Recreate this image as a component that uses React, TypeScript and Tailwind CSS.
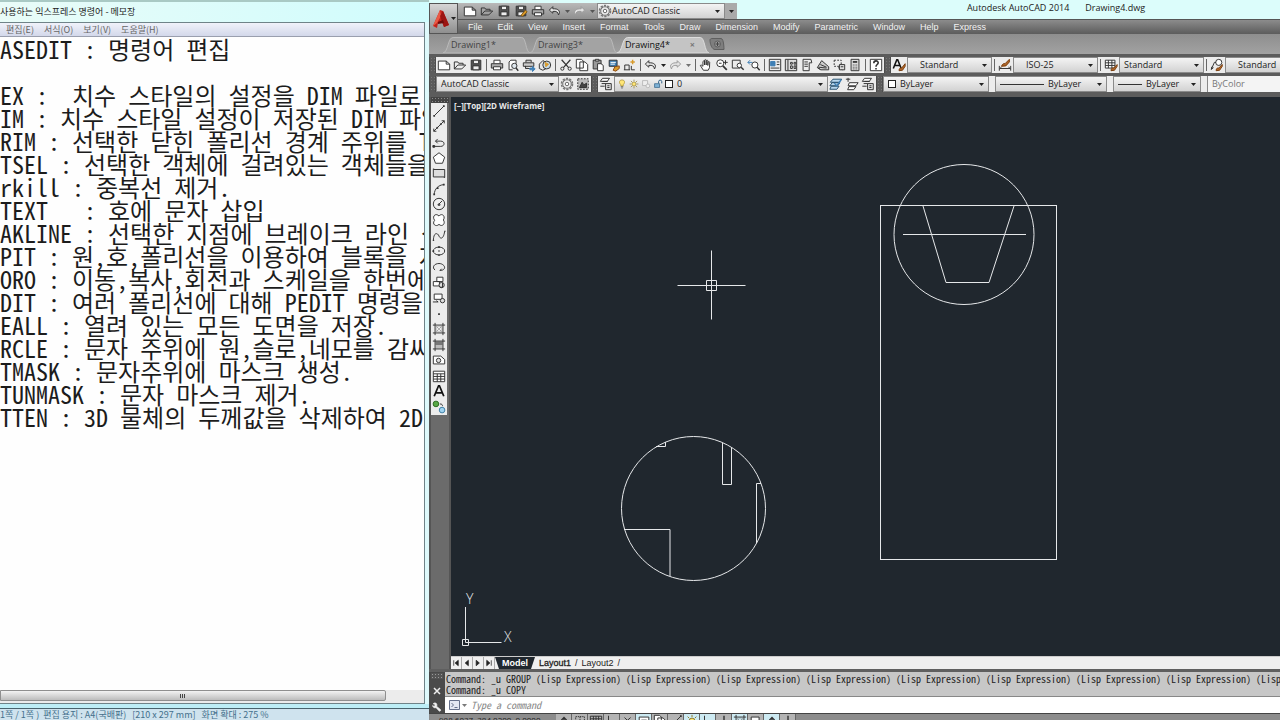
import React from 'react';
import clsx from 'clsx';

const NOTES = `ASEDIT : 명령어 편집

EX :  치수 스타일의 설정을 DIM 파일로 저장
IM : 치수 스타일 설정이 저장된 DIM 파일
RIM : 선택한 닫힌 폴리선 경계 주위를 TRIM
TSEL : 선택한 객체에 걸려있는 객체들을
rkill : 중복선 제거.
TEXT   : 호에 문자 삽입
AKLINE : 선택한 지점에 브레이크 라인 삽입
PIT : 원,호,폴리선을 이용하여 블록을 자름
ORO : 이동,복사,회전과 스케일을 한번에
DIT : 여러 폴리선에 대해 PEDIT 명령을
EALL : 열려 있는 모든 도면을 저장.
RCLE : 문자 주위에 원,슬로,네모를 감싸
TMASK : 문자주위에 마스크 생성.
TUNMASK : 문자 마스크 제거.
TTEN : 3D 물체의 두께값을 삭제하여 2D`;

const ink = '#333';
const amber = '#d89a2b';
const blue = '#3f7fb5';

/* Glyphs are drawn on a 16x16 grid */
const glyphs: Record<string, React.ReactNode> = {
  new: <path d="M1.5 3.5h9l4 3.500v6.500h-13zM10.5 3.5v3.500h4" fill="#fff" />,
  open: <path d="M1.5 12.5v-8h4l1 1.5h5v2M1.5 12.5l4-4.5h9l-4.5 4.5z" />,
  save: (
    <>
      <path d="M2.5 2.5h11v11h-11z" fill="#555" />
      <path d="M5 2.5h6v4H5zM4.5 9h7v4.5h-7z" fill="#eee" />
    </>
  ),
  saveAs: (
    <>
      <path d="M2.5 2.5h11v11h-11z" fill="#555" />
      <path d="M5 2.5h6v4H5zM4.5 9h7v4.5h-7z" fill="#eee" />
      <path d="m8 13 5-6 2 2-5 5z" fill={amber} stroke="#875b12" />
    </>
  ),
  print: (
    <>
      <path d="M4.5 6V2.5h7V6" fill="#fff" />
      <path d="M1.5 6.5h13v5h-13z" fill="#aaa" />
      <path d="M4 10h8v3.5H4z" fill="#fff" />
    </>
  ),
  preview: (
    <>
      <path d="M3.5 13.5v-9l2-2h6v4M3.5 13.5h4" fill="#fff" />
      <circle cx="9.5" cy="9" r="3" fill="#dfe7ee" />
      <path d="m11.5 11.5 2.5 3" strokeWidth="1.6" />
    </>
  ),
  publish: (
    <>
      <path d="M4.5 5V2.5h6V5M1.5 5.5h12v4h-12zM4 9v3h5" fill="#ccc" />
      <path d="M9 11.5h3v-2l3 3-3 3v-2H9z" fill={blue} stroke={blue} />
    </>
  ),
  globe: (
    <>
      <path d="m1.5 7 4-4 4 2v7l-4 2-4-2z" fill="#e7e7e7" />
      <circle cx="10" cy="8" r="4.5" fill="#c6d9e6" />
      <path d="m8 5 4 2-3 3z" fill={amber} stroke={amber} />
    </>
  ),
  cut: (
    <>
      <path d="m3 2 8 9M13 2l-8 9" strokeWidth="1.4" />
      <circle cx="3.8" cy="12.2" r="1.8" />
      <circle cx="12.2" cy="12.2" r="1.8" />
    </>
  ),
  copy: <path d="M1.5 1.5h6l2 2v8h-8zM5.5 4.5h6l3 3v7h-9z" fill="#fff" />,
  paste: (
    <>
      <path d="M2.5 2.5h9v10h-9z" fill="#999" />
      <path d="M5 1.5h4v2H5z" fill="#ddd" />
      <path d="M7.5 6.5h4l2.5 2v6H7.5z" fill="#fff" />
    </>
  ),
  match: (
    <>
      <path d="M2.5 2.5h9v7h-9z" fill={blue} />
      <path d="M4 7h5M4 5h6" stroke="#fff" />
      <path d="M7 14l2-4 5-1v3l-4 3z" fill={amber} stroke="#8b4a14" />
    </>
  ),
  blockEdit: (
    <>
      <path d="M2 13.5V8h5v5.5M9.500 9v4.500h4M1 13.500h7" />
      <path d="M11 2v5M8.500 4.500h5" stroke={amber} strokeWidth="1.6" />
    </>
  ),
  undo: <path d="m5.5 3-4 4 4 3.500V8.500c4-.5 6 .5 6.500 4 3-4.500-.5-7.500-6.500-7z" fill="#e3e3e3" />,
  redo: <path d="m10.500 3 4 4-4 3.500V8.500c-4-.5-6 .5-6.500 4-3-4.500.5-7.500 6.500-7z" fill="#e3e3e3" stroke="#999" />,
  pan: (
    <path
      d="M5 14 1.500 8.500c1-1 2 0 3 1V4c.8-1 1.800-.5 1.800.3V8 2.500c.8-1 1.900-.5 1.900.3V8 3c.8-.9 1.900-.4 1.900.4V8.500l.3-4c.8-.8 1.800-.3 1.800.6L12 11l-1.500 3z"
      fill="#fff"
    />
  ),
  zoomRt: (
    <>
      <circle cx="6" cy="6" r="4" fill="#fff" />
      <path d="m9 9 4.500 4.500" strokeWidth="2" />
      <path d="M12 2.500v5M9.500 5h5M4.500 6h3" />
    </>
  ),
  zoomWin: (
    <>
      <path d="M1.500 2.500h9v9h-9z" />
      <circle cx="9.500" cy="8.500" r="2.500" fill="#fff" />
      <path d="m11.500 10.500 3 3" strokeWidth="1.6" />
    </>
  ),
  zoomPrev: (
    <>
      <circle cx="9" cy="8" r="3.500" fill="#fff" />
      <path d="m11.500 10.500 3 3.500" strokeWidth="1.6" />
      <path d="M1 5h5M1 5l2.500-2.500M1 5l2.500 2.500" stroke={blue} />
    </>
  ),
  props: (
    <>
      <path d="M1.500 1.500h13v13h-13z" fill="#eee" />
      <path d="M3 4h5v5H3z" fill={blue} stroke={blue} />
      <path d="M10 4.500h3M10 7.500h3M3 11.500h10" />
    </>
  ),
  palette: (
    <>
      <path d="M1.500 1.500h13v13h-13z" fill="#ddd" />
      <path d="M4.500 2v12M7.500 5h2v2h-2zM11.500 5h2v2h-2zM7.500 9h2v3h-2zM11.500 9h2v3h-2z" />
    </>
  ),
  tools: (
    <>
      <path d="M3.500 1.500h9l1 4h-3v9h-7z" fill="#eee" />
      <path d="M5 4.500h4M5 7h4M5 9.500h4" />
    </>
  ),
  sheets: (
    <>
      <path d="m1.500 11 5-8 8 7v3.500h-9z" fill="#ccc" />
      <path d="m3 10.500 9 1M5 7.500l7 3M2 11l3 2" />
    </>
  ),
  markup: (
    <>
      <path d="M2.500 2.500h8v7h-8zM7 11l6 3" strokeDasharray="2 1.500" />
      <path d="M8.500 7.500h6v6h-6zM10 10h3" fill="#ddd" />
    </>
  ),
  calc: (
    <>
      <path d="M3.500 1.500h9v13h-9z" fill="#ddd" />
      <path d="M5.500 4.500h5" strokeWidth="2" />
      <path d="M5.500 8h5M5.500 10.500h5M5.500 12.500h5" strokeDasharray="1 1" />
    </>
  ),
  help: (
    <>
      <path d="M1.500 1.500h13v13h-13z" fill="#fff" />
      <path d="M5.500 6c0-3.500 5-3.500 5-.5C10.500 7.500 8 7.500 8 10M8 11.500v1.500" strokeWidth="1.800" />
    </>
  ),
  gear: (
    <>
      <circle cx="8" cy="8" r="6.300" strokeWidth="1.800" strokeDasharray="2.600 1.350" stroke="#777" />
      <circle cx="8" cy="8" r="4.900" fill="#eee" stroke="#666" />
      <circle cx="8" cy="8" r="2" fill="#fff" stroke="#666" />
    </>
  ),
  workspace: (
    <>
      <path d="M2 2h12v12H2z" fill="#bbb" strokeDasharray="2 1.500" />
      <path d="m4 12 3-6 2 3 3-2v5z" fill="#444" />
    </>
  ),
  layers: (
    <>
      <path d="M4 1.500h8L9.500 5h-8zM4 5h6M3 7.500h5M1.500 10.500h5" fill="#fff" />
      <path d="M7.500 7.500h6.500v7H7.500zM9.500 10h2.500M9.500 12h2.500" fill="#ddd" />
    </>
  ),
  bulb: (
    <>
      <path d="M8 1.500c5 0 5 5 2 7.500v2H6V9C3 6.500 3 1.500 8 1.500z" fill="#ffe677" stroke="#a58a2a" />
      <path d="M6 12.500h4M7 14.500h2" />
    </>
  ),
  sun: (
    <>
      <circle cx="8" cy="8" r="3.300" fill="#ffe677" stroke="#8d7a2c" />
      <path d="M8 1v2.500M8 12.500V15M1 8h2.500M12.500 8H15M3 3l1.800 1.800M11.200 11.200 13 13M13 3l-1.800 1.800M3 13l1.800-1.800" stroke="#8d7a2c" />
    </>
  ),
  freeze: (
    <>
      <path d="M2.500 2.500h8v8h-8z" fill="#eee" stroke="#aaa" />
      <circle cx="11" cy="11" r="3" fill="#eee" stroke="#aaa" />
    </>
  ),
  lock: (
    <>
      <path d="M2.500 7.500h8v6h-8z" fill="#7fb2d6" stroke="#2c5f86" />
      <path d="M9 7V4c0-3 5-3 5 0v3" stroke="#2c5f86" strokeWidth="1.600" />
    </>
  ),
  layerCur: (
    <>
      <path d="M4.500 2.500h10l-3 3.500h-10zM3.500 6.500h9l-2.500 3.500h-9zM2.500 10.500h9L9 14H1z" fill="#b8d7ee" stroke="#28506e" />
      <path d="m6 7 3 3 5-7" stroke={blue} strokeWidth="1.600" />
    </>
  ),
  layerPrev: (
    <>
      <path d="M5 6.500h10L12.500 10h-9zM4.500 11h8L10 14.500H3z" fill="#fff" />
      <path d="M1 2.500h5M3.500 1v4.500" />
    </>
  ),
  textStyle: (
    <>
      <path d="m1.500 12 4-10h1l4 10M3 8.500h6" stroke="#111" strokeWidth="1.800" />
      <path d="M8 14.500c0-3 2-3.500 3-3l4-5v3L12 14z" fill="#b0672a" stroke="#7a3d0c" />
    </>
  ),
  dimStyle: (
    <>
      <path d="M1.500 9v5.500M14.500 9v5.500M2 12h12M2 12l2-1.500M14 12l-2-1.500" />
      <path d="M4 9.500c1-3 3-3.500 4-3l5-5v3L9 9z" fill="#b0672a" stroke="#7a3d0c" />
    </>
  ),
  tableStyle: (
    <>
      <path d="M1.500 2.500h11v9h-11zM1.500 5.500h11M1.500 8.500h11M5 2.500v9M9 2.500v9" fill="#fff" />
      <path d="M8 14.500c0-3 2-3.500 3-3l4-4v2L12 14z" fill="#b0672a" stroke="#7a3d0c" />
    </>
  ),
  leaderStyle: (
    <>
      <circle cx="10" cy="5" r="3.500" fill="#fff" />
      <path d="M1.500 13 5 5h2M1.500 13l.5-3M1.500 13 4 11" />
      <path d="M7 14.500c0-3 2-3.500 3-3l4-4v2L11 14z" fill="#b0672a" stroke="#7a3d0c" />
    </>
  ),
  line: (
    <>
      <path d="M3 13 13 3" />
      <path d="M1.500 12.500h2v2h-2zM12.500 1.500h2v2h-2z" fill={ink} stroke="none" />
    </>
  ),
  xline: (
    <>
      <path d="M2 14 14 2M2 14v-3M2 14h3M14 2v3M14 2h-3" />
      <path d="M5.500 9.500h1v1h-1zM9.500 5.500h1v1h-1z" fill={ink} />
    </>
  ),
  pline: (
    <>
      <path d="M2 13h8c5 0 5-6 0-6H4M4 7l2.500-2.500M4 7l2.500 2.500" />
      <path d="M1 12h2v2H1z" fill={ink} />
    </>
  ),
  polygon: <path d="m8 2 6.500 5-2.500 7H4L1.500 7z" fill="#fff" />,
  rect: <path d="M1.500 4h13v8.500h-13zM1 3.500h1.500M13.500 13H15" fill="#ddd" />,
  arc: (
    <>
      <path d="M2.500 14C3 8 7 3.500 13.500 3" />
      <path d="M1.500 13h2v2h-2zM5.500 6h2v2h-2zM12.500 2h2v2h-2z" fill={ink} stroke="none" />
    </>
  ),
  circle: (
    <>
      <circle cx="8" cy="8" r="6.500" fill="#eee" />
      <path d="m7.500 8.500 4-4M7 8h2v1.500H7z" />
    </>
  ),
  cloud: (
    <path d="M8 3.500c3-4 8 0 5 4.500 3 4-1.500 8.500-5 5-3.500 3.500-8.500-.5-5-4.500-3.500-5 1.500-9 5-5z" fill="#fff" />
  ),
  spline: <path d="M1.500 13.500C2 2 7 5 8 8s5 5 6.500-5.500M1 13h1.500M14 2.500h1.500" />,
  ellipse: (
    <>
      <ellipse cx="8" cy="8" rx="6.500" ry="4.500" fill="#eee" />
      <path d="M7 2.500h2v2H7zM7 7.500h2v1H7zM7 12h2v1.500H7zM.5 7h2v2h-2z" fill={ink} stroke="none" />
    </>
  ),
  ellArc: <path d="M3.500 11.500c-4-3-1-7.500 4.500-7.500s9 5.500 4 7.500l-3 .5M9 12l2-2" />,
  insert: (
    <>
      <path d="M5.500 2.500h7v5h-7zM1.500 7.500h7v5h-7z" fill="#fff" />
      <circle cx="11" cy="11.500" r="3" fill="#ddd" />
      <path d="M12 9v5h-3" />
    </>
  ),
  block: (
    <>
      <path d="M2.500 3.500h9v6h-9z" fill="#fff" />
      <circle cx="12" cy="11" r="2.500" fill="#ddd" />
      <path d="M1 12.500h6M7 12.500 5 11" />
    </>
  ),
  point: <path d="M7 7h2v2H7z" fill={ink} stroke="none" />,
  hatch: (
    <>
      <path d="M3.500 1v14M12.500 1v14M1 3.500h14M1 12.500h14" />
      <path d="M4 8l4-4M4 12l8-8M8 12l4-4M4 8l4 4M4 4l8 8M8 4l4 4" strokeWidth="0.6" stroke="#777" />
    </>
  ),
  gradient: (
    <>
      <path d="M4 4h8v4H4z" fill="#777" stroke="none" />
      <path d="M4 8h8v4H4z" fill="#bbb" stroke="none" />
      <path d="M3.500 1v14M12.500 1v14M1 3.500h14M1 12.500h14" />
    </>
  ),
  region: (
    <>
      <path d="M1.500 12.500v-9H10l4.500 4v5z" fill="#fff" />
      <circle cx="7.500" cy="8.500" r="2.500" fill="#ddd" />
    </>
  ),
  table: <path d="M1.500 2.500h13v12h-13zM1.500 5.500h13M1.500 8.500h13M1.500 11.500h13M6 5.500v9M10 5.500v9" fill="#fff" />,
  mtext: <path d="m2.500 14 5-12h1l5 12M4.500 10h7" stroke="#111" strokeWidth="2" />,
  addSel: (
    <>
      <circle cx="4.500" cy="4.500" r="3.200" fill="#58a846" stroke="#2c6a20" />
      <circle cx="11.500" cy="11.500" r="3.200" fill="#9fd3f0" stroke="#3a7da4" />
      <path d="M9 4.500c2.500 0 3 1 3 2.500" />
    </>
  ),
  wrench: (
    <path
      d="M6.500 2c-2-1-4-.5-4.500 1l2.500.5.5 2-2 1.500-2-1.500c0 3 3 4.500 5.500 3.500l5 5.500c1.500 1 3-1 2-2.500l-6-5C8 5 8 3 6.500 2z"
      fill="#f2f2f2"
      stroke="#f2f2f2"
    />
  ),
  snap: <path d="M3 3h10v10H3zM8 3v10M3 8h10" strokeDasharray="1.500 1" />,
  infer: <path d="M4 12h8M8 4v8M5 7l3-3 3 3" strokeWidth="1.600" />,
  grid: <path d="M1.500 2.500h13v11h-13zM1.500 5.500h13M1.500 8.500h13M5 2.500v11M8 2.500v11M11 2.500v11" />,
  ortho: <path d="M4 2v11h9" />,
  polar: <path d="M2 12h12M2 12l9-8M4 4l8 8" />,
  osnap: <path d="M2.500 3.500h11v9h-11zM5 7h6" fill="#fff" />,
  plus: <path d="M8 2v12M2 8h12" strokeWidth="1.600" />,
};

function Icon({ name, size = 'md' }: { name: string; size?: 'sm' | 'md' }) {
  return (
    <svg
      viewBox="0 0 16 16"
      aria-hidden="true"
      className={clsx('shrink-0', size === 'md' ? 'size-3.5' : 'size-2.5')}
      fill="none"
      stroke={ink}
      strokeWidth="1.1"
    >
      {glyphs[name]}
    </svg>
  );
}

function IconButton({ name, label }: { name: string; label: string }) {
  return (
    <button type="button" aria-label={label} className="flex h-4 w-4 shrink-0 items-center justify-center">
      <Icon name={name} />
    </button>
  );
}

const Triangle = () => (
  <svg viewBox="0 0 5 3" aria-hidden="true" className="h-[3px] w-[5px] shrink-0">
    <path d="M0 0h5L2.500 3z" fill="#222" />
  </svg>
);

const Separator = () => <span className="mx-0.5 h-3 w-px shrink-0 bg-[#666]" />;

const Grip = () => (
  <span className="w-[7px] shrink-0 self-stretch border-x border-[#4c4c4c] bg-[radial-gradient(#777_30%,#5c5c5c_35%)] bg-size-[3px_3px]" />
);

interface ComboProps {
  label: string;
  value: string;
  className?: string;
  textClass?: string;
  children?: React.ReactNode;
}

/* Drop-down with an optional swatch or line sample before its text */
function Combo({ label, value, className, textClass = 'pl-1', children }: ComboProps) {
  return (
    <div
      className={clsx(
        'relative flex h-4 shrink-0 items-center border border-[#8a8a8a] bg-linear-to-b from-[#f4f4f4] to-[#d2d2d2]',
        className
      )}
    >
      {children}
      <select
        aria-label={label}
        className={clsx('h-full min-w-0 flex-1 appearance-none bg-transparent text-[9px] leading-3 text-[#222] outline-none', textClass)}
      >
        <option>{value}</option>
      </select>
      <span className="pointer-events-none absolute inset-y-0 right-1 flex items-center">
        <Triangle />
      </span>
    </div>
  );
}

function Notepad() {
  return (
    <section className="flex w-[429px] shrink-0 flex-col bg-[#def9fb]">
      <div className="flex min-h-0 flex-1 flex-col border-t-2 border-[#a9c9c4]">
        <h1 className="h-5 shrink-0 bg-linear-to-r from-[#e9fcf8] to-[#cffcfd] font-['Noto_Sans_CJK_KR',sans-serif] text-[9px] leading-5 text-[#222]">
          사용하는 익스프레스 명령어 - 메모장
        </h1>
        <div className="mr-1 flex min-h-0 flex-1 flex-col border-y border-r border-[#6f8388]">
          <nav className="flex h-3.5 shrink-0 gap-2.5 border-b border-[#9a9fae] bg-linear-to-b from-[#f0f2fa] to-[#d3d8ea] pl-1.5 font-['Noto_Sans_CJK_KR',sans-serif] text-[9px] leading-[13px] text-[#666]">
            {['편집(E)', '서식(O)', '보기(V)', '도움말(H)'].map((item) => (
              <button type="button" key={item}>
                {item}
              </button>
            ))}
          </nav>
          <textarea
            aria-label="메모"
            wrap="off"
            spellCheck={false}
            defaultValue={NOTES}
            className="min-h-0 w-full flex-1 resize-none overflow-hidden whitespace-pre bg-[#fefefe] font-['Noto_Sans_Mono_CJK_KR','Noto_Sans_CJK_KR',monospace] text-[24px] leading-[23px] font-light text-[#1c1c1c] outline-none"
          />
          <div className="flex h-[13px] shrink-0 bg-[#ececec] pr-[38px]">
            <div className="flex h-[11px] flex-1 items-center justify-center gap-px rounded-r-xs border border-[#8f8f8f] bg-linear-to-b from-[#f3f3f3] to-[#bdbdbd] pr-[22px]">
              <span className="h-1 w-px bg-[#444]" />
              <span className="h-1 w-px bg-[#444]" />
              <span className="h-1 w-px bg-[#444]" />
            </div>
          </div>
        </div>
        <div className="h-1 shrink-0 bg-[#bdeef6]" />
      </div>
      <footer className="h-[12px] shrink-0 overflow-hidden border-t border-[#49636e] bg-[#cfe3ee] font-['Noto_Sans_CJK_KR',sans-serif] text-[9px] leading-[11px] whitespace-pre text-[#44708c]">
        {'1쪽 / 1쪽 )  편집 용지 : A4(국배판)   [210 x 297 mm]   화면 확대 : 275 %'}
      </footer>
    </section>
  );
}

const menus = [
  'File', 'Edit', 'View', 'Insert', 'Format', 'Tools', 'Draw', 'Dimension',
  'Modify', 'Parametric', 'Window', 'Help', 'Express',
];

function TitleArea() {
  return (
    <header className="flex h-[34px] shrink-0 bg-[#dcfdfb]">
      <button
        type="button"
        aria-label="Application menu"
        className="mt-[3px] flex w-[29px] shrink-0 items-center justify-center gap-px border border-[#555] bg-linear-to-b from-[#d6d6d6] to-[#8f8f8f]"
      >
        <svg viewBox="0 0 18 20" aria-hidden="true" className="h-5 w-[18px]">
          <path d="M1 17 8 1l3 1 6 14-5 2-2-5-4 1-1 5z" fill="#c2241c" />
          <path d="M8 1 1 17l4-3 4-7z" fill="#ea5a45" />
          <path d="m11 2 6 14-5 2-4-11z" fill="#9c1512" />
          <path d="m6 13 5-2 1 3-6 1z" fill="#6d0b0b" />
        </svg>
        <Triangle />
      </button>
      <div className="flex min-w-0 flex-1 flex-col">
        <div className="flex h-[19px] shrink-0">
          <div className="mt-[3px] flex items-center rounded-tr-sm bg-linear-to-b from-[#b9b9b9] to-[#8f8f8f] pl-1">
            <div className="flex gap-px">
              <IconButton name="new" label="New" />
              <IconButton name="open" label="Open" />
              <IconButton name="save" label="Save" />
              <IconButton name="saveAs" label="Save as" />
              <IconButton name="print" label="Plot" />
              <IconButton name="undo" label="Undo" />
            </div>
            <span className="flex w-2 justify-center opacity-60"><Triangle /></span>
            <IconButton name="redo" label="Redo" />
            <span className="flex w-2.5 justify-center opacity-60"><Triangle /></span>
            <Combo label="Quick workspace" value="AutoCAD Classic" className="w-[128px]" textClass="pl-0">
              <Icon name="gear" />
            </Combo>
            <button type="button" aria-label="Customize" className="flex h-4 w-3 items-center justify-center bg-[#aaa]">
              <Triangle />
            </button>
          </div>
          <div className="flex flex-1 justify-center gap-4 pr-[17px] pl-28 text-[9px] leading-[15px] whitespace-nowrap text-[#222]">
            <span>Autodesk AutoCAD 2014</span>
            <span>Drawing4.dwg</span>
          </div>
        </div>
        <nav className="flex flex-1 items-center gap-[15px] border-t border-[#555] bg-linear-to-b from-[#8c8c8c] to-[#5c5c5c] pl-2.5 font-['Liberation_Sans',sans-serif] text-[9px] leading-[13px] text-[#f2f2f2]">
          {menus.map((item) => (
            <button type="button" key={item}>
              {item}
            </button>
          ))}
        </nav>
      </div>
    </header>
  );
}

function DrawingTab({ name, active }: { name: string; active?: boolean }) {
  return (
    <button
      type="button"
      className={clsx(
        'relative flex h-4 shrink-0 items-center justify-between pr-2.5 text-[9px]',
        active ? 'w-[92px] text-[#111]' : 'w-[87px] text-[#444]'
      )}
    >
      <svg viewBox="0 0 95 16" preserveAspectRatio="none" aria-hidden="true" className="absolute inset-0 size-full">
        <path
          d="M0 16C6 15 5 .5 11 .5h75c5 0 4 14.500 9 15.500z"
          fill={active ? '#c4c4c4' : '#a3a3a3'}
          stroke={active ? '#ddd' : '#bbb'}
        />
      </svg>
      <span className="relative pl-2">{name}</span>
      {active && <span className="relative pr-1 font-bold text-[#777]">×</span>}
    </button>
  );
}

const standardTools: string[][] = [
  ['new', 'open', 'save'],
  ['print', 'preview', 'publish', 'globe'],
  ['cut', 'copy', 'paste', 'match', 'blockEdit'],
];

function Toolbars() {
  return (
    <div className="flex shrink-0 flex-col gap-[3px] border-t-[3px] border-b-[5px] border-[#5c5c5c] bg-[#5c5c5c]">
      <div className="flex h-4 items-center">
        <Grip />
        <div className="flex h-full shrink-0 items-center bg-[#ececec]">
          {standardTools.map((group, i) => (
            <React.Fragment key={i}>
              {group.map((tool) => (
                <IconButton key={tool} name={tool} label={tool} />
              ))}
              <Separator />
            </React.Fragment>
          ))}
          <IconButton name="undo" label="Undo" />
          <span className="flex w-2 justify-center"><Triangle /></span>
          <IconButton name="redo" label="Redo" />
          <span className="flex w-2.5 justify-center opacity-60"><Triangle /></span>
          <Separator />
          {['pan', 'zoomRt', 'zoomWin', 'zoomPrev'].map((tool) => (
            <IconButton key={tool} name={tool} label={tool} />
          ))}
          <Separator />
          {['props', 'palette', 'tools', 'sheets', 'markup', 'calc'].map((tool) => (
            <IconButton key={tool} name={tool} label={tool} />
          ))}
          <Separator />
          <IconButton name="help" label="Help" />
        </div>
        <Grip />
        <div className="flex h-full min-w-0 flex-1 items-center bg-[#ececec]">
          <IconButton name="textStyle" label="Text style" />
          <Combo label="Text style" value="Standard" className="w-[85px]" textClass="pl-3" />
          <Separator />
          <IconButton name="dimStyle" label="Dimension style" />
          <Combo label="Dimension style" value="ISO-25" className="w-[85px]" textClass="pl-3" />
          <Separator />
          <IconButton name="tableStyle" label="Table style" />
          <Combo label="Table style" value="Standard" className="w-[85px]" textClass="pl-1" />
          <Separator />
          <IconButton name="leaderStyle" label="Multileader style" />
          <Combo label="Multileader style" value="Standard" className="w-[85px]" textClass="pl-3" />
        </div>
      </div>
      <div className="flex h-4 items-center">
        <Grip />
        <div className="flex h-full shrink-0 items-center bg-[#ececec]">
          <Combo label="Workspace" value="AutoCAD Classic" className="w-[123px]" textClass="pl-1" />
          <IconButton name="gear" label="Workspace settings" />
          <IconButton name="workspace" label="My workspace" />
        </div>
        <Grip />
        <div className="flex h-full shrink-0 items-center bg-[#ececec]">
          <IconButton name="layers" label="Layer properties" />
          <Combo label="Layer" value="0" className="w-[214px]" textClass="pl-1">
            <span className="flex gap-0.5 pl-0.5">
              <Icon name="bulb" size="sm" />
              <Icon name="sun" size="sm" />
              <Icon name="freeze" size="sm" />
              <Icon name="lock" size="sm" />
            </span>
            <span className="ml-0.5 size-2 border border-[#222] bg-white" />
          </Combo>
          <IconButton name="layerCur" label="Make current" />
          <IconButton name="layerPrev" label="Layer previous" />
          <IconButton name="layers" label="Layer states" />
        </div>
        <Grip />
        <div className="flex h-full min-w-0 flex-1 items-center gap-1.5 bg-[#ececec]">
          <Combo label="Color" value="ByLayer" className="w-[106px]" textClass="pl-1">
            <span className="ml-1 size-2 border border-[#222] bg-white" />
          </Combo>
          <Combo label="Linetype" value="ByLayer" className="w-[112px]" textClass="pl-1">
            <span className="ml-1 h-px w-11 bg-[#333]" />
          </Combo>
          <Combo label="Lineweight" value="ByLayer" className="w-[88px]" textClass="pl-1">
            <span className="ml-1 h-px w-6 bg-[#333]" />
          </Combo>
          <div className="flex h-full min-w-0 flex-1 border-l border-[#888] bg-[#f4f4f4]">
            <select disabled aria-label="Plot style" className="w-full appearance-none pl-1 text-[9px] text-[#777]">
              <option>ByColor</option>
            </select>
          </div>
        </div>
      </div>
    </div>
  );
}

const drawTools = [
  'line', 'xline', 'pline', 'polygon', 'rect', 'arc', 'circle', 'cloud', 'spline', 'ellipse',
  'ellArc', 'insert', 'block', 'point', 'hatch', 'gradient', 'region', 'table', 'mtext', 'addSel',
];

function Drawing() {
  return (
    <div className="relative min-h-0 flex-1 overflow-hidden bg-[#20272e]">
      <svg className="absolute inset-0 size-full" fill="none" stroke="#e6e8ea" aria-label="Model space">
        <rect x="429.5" y="108.5" width="176" height="354" />
        <circle cx="513" cy="137.5" r="70" />
        <path d="M472 109 495 185.500h43L563 109M452 137.500h123" />
        <circle cx="242.500" cy="411.500" r="72" />
        <path d="M205 349.500h9.500V345M271.500 346v41.500h9V351M310 386.500h-4.500V446M173 432.500h46V479" />
        <path d="M260.500 153.500v69M226.500 188.500h68M255.500 183.500h10v10h-10z" />
        <path d="M14.500 510v35.500h36M11.500 542.500h6v6h-6z" />
        <g fill="#e6e8ea" stroke="none" fontFamily="'Open Sans', sans-serif" fontSize="14" fontWeight="300">
          <text x="15" y="507">Y</text>
          <text x="53" y="545">X</text>
        </g>
      </svg>
      <p className="relative pt-[3px] pl-[3px] text-[8px] leading-3 font-bold text-[#e8e8e8]">[−][Top][2D Wireframe]</p>
    </div>
  );
}

function LayoutTabs() {
  return (
    <div className="flex h-[13px] shrink-0 border-t border-[#ccc] bg-[#efefef] font-['Liberation_Sans',sans-serif] text-[9px] leading-3 text-[#222]">
      {['M3 2v6M8 2 4.500 5 8 8z', 'M7 2 3.500 5 7 8z', 'M3.500 2 7 5 3.500 8z', 'M8 2v6M3 2l3.500 3L3 8z'].map((d, i) => (
        <button type="button" key={i} aria-label={`Scroll layouts ${i + 1}`} className="w-[11px] shrink-0 border-r border-[#aaa]">
          <svg viewBox="0 0 11 10" className="h-2.5 w-full" fill="#222" stroke="#222" strokeWidth="0.8">
            <path d={d} />
          </svg>
        </button>
      ))}
      <button type="button" className="bg-[#20272e] px-[7px] font-bold text-white [clip-path:polygon(0_0,100%_0,calc(100%-4px)_100%,4px_100%)]">
        Model
      </button>
      <button type="button" className="pl-1 [-webkit-text-stroke:0.3px_#222]">Layout1</button>
      <span className="px-1">/</span>
      <button type="button">Layout2</button>
      <span className="px-1">/</span>
    </div>
  );
}

function CommandLine() {
  return (
    <div className="flex h-[41px] shrink-0 bg-[#4a4a4a]">
      <div className="flex w-4 shrink-0 flex-col items-center justify-between py-px">
        <span className="h-1.5 w-3 bg-[radial-gradient(#999_30%,#555_35%)] bg-size-[3px_3px]" />
        <button type="button" aria-label="Close" className="flex">
          <svg viewBox="0 0 8 8" className="size-2" stroke="#eee" strokeWidth="1.5">
            <path d="m1 1 6 6M7 1 1 7" />
          </svg>
        </button>
        <button type="button" aria-label="Customize" className="flex">
          <Icon name="wrench" size="sm" />
        </button>
      </div>
      <div className="flex min-w-0 flex-1 flex-col font-['Noto_Sans_Mono_CJK_KR',monospace] text-[10px]">
        <div className="h-[25px] overflow-hidden border-b border-[#888] bg-[#c7c7c7] pt-px pl-px leading-[11px] whitespace-pre text-[#222]">
          {'Command: _u GROUP' + ' (Lisp Expression)'.repeat(9) + '\nCommand: _u COPY'}
        </div>
        <label className="flex flex-1 items-center gap-0.5 bg-white pl-1">
          <svg viewBox="0 0 11 10" aria-hidden="true" className="h-2.5 w-[11px] shrink-0" fill="#e4e8f2" stroke="#66708a">
            <path d="M.5.5h10v9H.5zM2.500 3l2 2-2 2M5.500 7.500h3" />
          </svg>
          <span className="opacity-60"><Triangle /></span>
          <input
            type="text"
            aria-label="Command"
            placeholder="Type a command"
            className="min-w-0 flex-1 pl-0.5 leading-[14px] italic outline-none placeholder:text-[#888]"
          />
        </label>
      </div>
    </div>
  );
}

const toggles = [
  { name: 'infer' },
  { name: 'snap' },
  { name: 'grid' },
  { name: 'ortho' },
  { name: 'polar' },
  { name: 'osnap', on: true },
  { name: 'copy' },
  { name: 'line' },
  { name: 'sun', on: true },
  { name: 'ortho', on: true },
  { name: 'plus' },
  { name: 'hatch', on: true },
  { name: 'block' },
  { name: 'infer', on: true },
  { name: 'plus' },
];

function StatusBar() {
  return (
    <footer className="flex h-[7px] shrink-0 overflow-hidden border-t border-[#444] bg-[#8c8c8c] text-[8px] leading-3 text-[#222]">
      <span className="w-[127px] shrink-0 pl-2.5 whitespace-nowrap">988.6037, 384.0200, 0.0000</span>
      {toggles.map((toggle, i) => (
        <button
          type="button"
          key={i}
          aria-label={`${toggle.name} mode`}
          className={clsx('flex h-4 w-4 shrink-0 justify-center border-r border-[#666]', toggle.on ? 'bg-[#cdeaf2]' : 'bg-[#b4b4b4]')}
        >
          <Icon name={toggle.name} />
        </button>
      ))}
    </footer>
  );
}

function AutoCad() {
  return (
    <main className="flex min-w-0 flex-1 flex-col overflow-hidden bg-[#676767]">
      <TitleArea />
      <div className="flex h-5 shrink-0 items-end bg-linear-to-b from-[#8e8e8e] to-[#a2a2a2] pb-px pl-3.5">
        <DrawingTab name="Drawing1*" />
        <DrawingTab name="Drawing3*" />
        <DrawingTab name="Drawing4*" active />
        <button type="button" aria-label="New drawing" className="flex h-3 self-center">
          <svg viewBox="0 0 16 12" className="h-3 w-4" fill="#7e7e7e" stroke="#5f5f5f">
            <path d="M1 2c0-1 1-1.500 2-1.500h9c3 0 3 11 3 11H6C3 11.500 1 6 1 2z" />
            <circle cx="8.500" cy="6" r="3" fill="#999" />
            <path d="M8.500 4v4M6.500 6h4" stroke="#444" />
          </svg>
        </button>
      </div>
      <Toolbars />
      <div className="flex min-h-0 flex-1">
        <aside className="flex w-[22px] shrink-0 flex-col border-x-2 border-[#555] bg-[#6b6b6b]">
          <span className="h-1.5 shrink-0 bg-[radial-gradient(#888_30%,#444_35%)] bg-size-[3px_3px]" />
          <div className="mr-0.5 flex h-[312px] shrink-0 flex-col items-center bg-[#ececec]">
            {drawTools.map((tool) => (
              <button type="button" key={tool} aria-label={tool} className="flex min-h-0 flex-1 items-center">
                <Icon name={tool} />
              </button>
            ))}
          </div>
        </aside>
        <div className="flex min-w-0 flex-1 flex-col">
          <Drawing />
          <LayoutTabs />
        </div>
      </div>
      <div className="h-[3px] shrink-0 bg-[#5f5f5f]" />
      <CommandLine />
      <StatusBar />
    </main>
  );
}

export default function App() {
  return (
    <div className="flex h-screen overflow-hidden font-['Open_Sans',sans-serif]">
      <Notepad />
      <AutoCad />
    </div>
  );
}
